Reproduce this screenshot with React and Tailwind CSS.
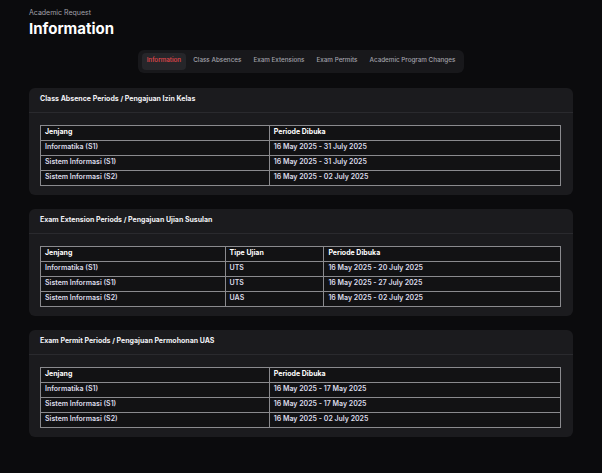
import React from 'react';

const tabs = ["Information", "Class Absences", "Exam Extensions", "Exam Permits", "Academic Program Changes"];

const sections = [
  {
    title: "Class Absence Periods / Pengajuan Izin Kelas",
    cols: ["Jenjang", "Periode Dibuka"],
    widths: ["w-[44%]", ""],
    rows: [
      ["Informatika (S1)", "16 May 2025 - 31 July 2025"],
      ["Sistem Informasi (S1)", "16 May 2025 - 31 July 2025"],
      ["Sistem Informasi (S2)", "16 May 2025 - 02 July 2025"],
    ],
  },
  {
    title: "Exam Extension Periods / Pengajuan Ujian Susulan",
    cols: ["Jenjang", "Tipe Ujian", "Periode Dibuka"],
    widths: ["w-[35.5%]", "w-[19%]", ""],
    rows: [
      ["Informatika (S1)", "UTS", "16 May 2025 - 20 July 2025"],
      ["Sistem Informasi (S1)", "UTS", "16 May 2025 - 27 July 2025"],
      ["Sistem Informasi (S2)", "UAS", "16 May 2025 - 02 July 2025"],
    ],
  },
  {
    title: "Exam Permit Periods / Pengajuan Permohonan UAS",
    cols: ["Jenjang", "Periode Dibuka"],
    widths: ["w-[44%]", ""],
    rows: [
      ["Informatika (S1)", "16 May 2025 - 17 May 2025"],
      ["Sistem Informasi (S1)", "16 May 2025 - 17 May 2025"],
      ["Sistem Informasi (S2)", "16 May 2025 - 02 July 2025"],
    ],
  },
];

function PeriodCard({ section }) {
  return (
    <div className="rounded-[6px] bg-[#1b1b1e]">
      <div className="flex h-[25px] items-center border-b border-[#2a2a2e] px-[11px] text-[7px] font-bold text-[#f1f1f5]">
        {section.title}
      </div>
      <div className="pb-[9px] pl-[11px] pr-[12px] pt-[12px]">
        <table className="w-full border-collapse border border-[#8a8a8e] text-[7px]">
          <thead>
            <tr className="h-[15px]">
              {section.cols.map((c, i) => (
                <th
                  key={c}
                  className={`${section.widths[i]} border border-[#8a8a8e] bg-[#121214] px-[4px] text-left font-bold text-white`}
                >
                  {c}
                </th>
              ))}
            </tr>
          </thead>
          <tbody>
            {section.rows.map((r, ri) => (
              <tr key={ri} className="h-[15px]">
                {r.map((cell, ci) => (
                  <td
                    key={ci}
                    className="border border-[#8a8a8e] bg-[#121214] px-[4px] font-semibold text-[#dcdcea]"
                  >
                    {cell}
                  </td>
                ))}
              </tr>
            ))}
          </tbody>
        </table>
      </div>
    </div>
  );
}

export default function App() {
  return (
    <div className="min-h-screen bg-[#0b0b0d] px-[29px] pt-[8px] pb-[30px] font-['Inter',sans-serif]">
      <div className="text-[7px] text-[#a1a1aa]">Academic Request</div>
      <h1 className="mt-[1px] text-[15px] font-bold leading-[18px] text-white">Information</h1>

      <div className="mt-[12px] flex justify-center">
        <div className="flex items-center gap-[2px] rounded-[6px] bg-[#18181b] px-[4px] py-[3px]">
          {tabs.map((t, i) => (
            <div
              key={t}
              className={
                i === 0
                  ? "flex h-[17px] items-center rounded-[4px] bg-[#26262a] px-[5px] text-[6.3px] font-medium text-[#e5484d]"
                  : "flex h-[17px] items-center px-[5px] text-[6.3px] font-medium text-[#a1a1aa]"
              }
            >
              {t}
            </div>
          ))}
        </div>
      </div>

      <div className="mt-[15px] flex flex-col gap-[14px]">
        {sections.map((s) => (
          <PeriodCard key={s.title} section={s} />
        ))}
      </div>
    </div>
  );
}
